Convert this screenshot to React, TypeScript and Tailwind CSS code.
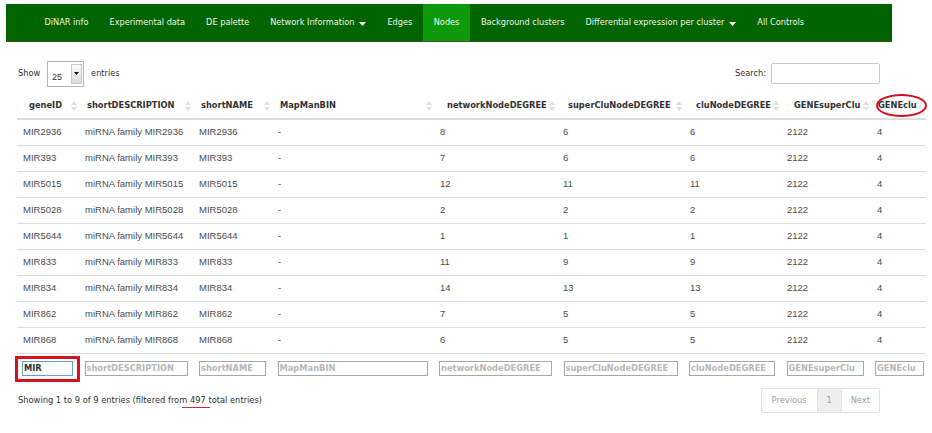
const navItems = [
  { label: 'DiNAR info' },
  { label: 'Experimental data' },
  { label: 'DE palette' },
  { label: 'Network Information', caret: true },
  { label: 'Edges' },
  { label: 'Nodes', active: true },
  { label: 'Background clusters' },
  { label: 'Differential expression per cluster', caret: true },
  { label: 'All Controls' },
];

// width = column width, pad = header text indent, filter = filter input width
const columns = [
  { name: 'geneID', width: 62, pad: 12, filter: 51 },
  { name: 'shortDESCRIPTION', width: 114, pad: 8, filter: 103 },
  { name: 'shortNAME', width: 79, pad: 8, filter: 67 },
  { name: 'MapManBIN', width: 162, pad: 8, filter: 150 },
  { name: 'networkNodeDEGREE', width: 123, pad: 13, filter: 113 },
  { name: 'superCluNodeDEGREE', width: 127, pad: 11, filter: 114 },
  { name: 'cluNodeDEGREE', width: 97, pad: 12, filter: 86 },
  { name: 'GENEsuperClu', width: 90, pad: 13, filter: 77 },
  { name: 'GENEclu', width: 55, pad: 7, filter: 49 },
];

const rows = [
  ['MIR2936', 8, 6, 6],
  ['MIR393', 7, 6, 6],
  ['MIR5015', 12, 11, 11],
  ['MIR5028', 2, 2, 2],
  ['MIR5644', 1, 1, 1],
  ['MIR833', 11, 9, 9],
  ['MIR834', 14, 13, 13],
  ['MIR862', 7, 5, 5],
  ['MIR868', 6, 5, 5],
] as const;

function SortIcon() {
  return (
    <svg width="6" height="10" viewBox="0 0 6 10" className="absolute right-[2px] top-[8px]">
      <path d="M3 0 L6 4 L0 4 Z" fill="#e0e0e0" />
      <path d="M0 6 L6 6 L3 10 Z" fill="#e0e0e0" />
    </svg>
  );
}

function Caret() {
  return (
    <svg width="7" height="4" viewBox="0 0 7 4" className="ml-[5px] mt-[3px]">
      <path d="M0 0 L7 0 L3.5 4 Z" fill="#ffffff" />
    </svg>
  );
}

export default function App() {
  return (
    <div className="w-[932px] h-[433px] bg-white overflow-hidden font-['DejaVu_Sans',sans-serif] text-[#333]">
      {/* Navbar */}
      <nav className="ml-[6px] mt-[4px] w-[886px] h-[38px] bg-[#006400] border-b border-[#3f5210] flex pl-[28px]">
        {navItems.map((item) => (
          <div
            key={item.label}
            className={`flex items-center px-[10.5px] text-[8.2px] text-[#eef5ea] ${item.active ? 'bg-[#0c9a0c] px-[11px]' : ''}`}
          >
            {item.label}
            {item.caret && <Caret />}
          </div>
        ))}
      </nav>

      <div className="px-[18px]">
        {/* Controls */}
        <div className="mt-[18px] w-[862px] h-[27px] flex items-center justify-between text-[8.2px]">
          <div className="flex items-center">
            <span>Show</span>
            <div className="ml-[7px] w-[37px] h-[26px] border border-[#b5b5b5] flex bg-white">
              <span className="flex-1 pl-[4px] pt-[9px] text-[9px] font-['Liberation_Sans',sans-serif]">25</span>
              <div className="w-[11px] my-[2px] mr-[1px] border border-[#c8c8c8] bg-gradient-to-b from-[#fafafa] to-[#dcdcdc] flex items-center justify-center">
                <svg width="5" height="3" viewBox="0 0 5 3">
                  <path d="M0 0 L5 0 L2.5 3 Z" fill="#111" />
                </svg>
              </div>
            </div>
            <span className="ml-[7px]">entries</span>
          </div>
          <div className="flex items-center">
            <span>Search:</span>
            <div className="ml-[5px] w-[109px] h-[21px] border border-[#c8c8c8] rounded-[2px] bg-white" />
          </div>
        </div>

        {/* Table */}
        <table className="mt-[6px] -ml-[1px] table-fixed border-collapse w-[909px]">
          <colgroup>
            {columns.map((c) => (
              <col key={c.name} style={{ width: c.width }} />
            ))}
          </colgroup>
          <thead>
            <tr className="h-[26px] border-b-2 border-[#dddddd]">
              {columns.map((c, i) => (
                <th
                  key={c.name}
                  className="relative p-0 text-left text-[8.3px] font-bold whitespace-nowrap"
                  style={{ paddingLeft: c.pad }}
                >
                  {c.name}
                  {i < 8 && <SortIcon />}
                  {c.name === 'GENEclu' && (
                    <div className="absolute left-[5px] top-[1px] w-[51px] h-[23px] rounded-[50%] border-[2.5px] border-[#d4101e]" />
                  )}
                </th>
              ))}
            </tr>
          </thead>
          <tbody className="font-['Liberation_Sans',sans-serif] text-[9.5px] text-[#4d4d4d]">
            {rows.map(([id, net, sup, clu]) => (
              <tr key={id} className="h-[26px] border-t border-[#dddddd] first:border-t-0">
                <td className="pl-[6px]">{id}</td>
                <td className="pl-[6px] whitespace-nowrap">miRNA family {id}</td>
                <td className="pl-[6px]">{id}</td>
                <td className="pl-[6px]">-</td>
                <td className="pl-[6px]">{net}</td>
                <td className="pl-[6px]">{sup}</td>
                <td className="pl-[6px]">{clu}</td>
                <td className="pl-[6px]">2122</td>
                <td className="pl-[6px]">4</td>
              </tr>
            ))}
          </tbody>
          <tfoot>
            <tr className="h-[29px] border-t border-[#dddddd]">
              <td colSpan={9} className="p-0">
                <div className="flex items-center gap-[11.5px] pl-[5px] pt-[1px]">
                  {columns.map((c, i) => (
                    <div key={c.name} className="relative shrink-0" style={{ width: c.filter }}>
                      <input
                        readOnly
                        value={i === 0 ? 'MIR' : ''}
                        placeholder={c.name}
                        className={`block w-full h-[15px] px-[1px] text-[8.3px] font-bold bg-white outline-none placeholder:text-[#b8b8b8] ${i === 0 ? 'border border-[#6e9fc9] text-[#333]' : 'border border-[#a8a8a8]'}`}
                      />
                      {i === 0 && (
                        <div className="absolute -left-[7px] -right-[7px] -top-[5px] -bottom-[6px] border-[3px] border-[#d7131f]" />
                      )}
                    </div>
                  ))}
                </div>
              </td>
            </tr>
          </tfoot>
        </table>

        {/* Footer */}
        <div className="mt-[6px] w-[862px] h-[25px] flex items-center justify-between text-[8.3px]">
          <span>
            Showing 1 to 9 of 9 entries (filtered from{' '}
            <span className="relative">
              497
              <span className="absolute -left-[8px] -right-[4px] -bottom-[3px] h-px bg-[#c0303a]" />
            </span>{' '}
            total entries)
          </span>
          <div className="flex h-[25px] border border-[#e2e2e2] rounded-[2px] text-[#a0a0a0]">
            <span className="px-[10px] flex items-center">Previous</span>
            <span className="w-[25px] flex items-center justify-center bg-[#eeeeee] border-x border-[#e2e2e2]">1</span>
            <span className="px-[9px] flex items-center">Next</span>
          </div>
        </div>
      </div>
    </div>
  );
}
